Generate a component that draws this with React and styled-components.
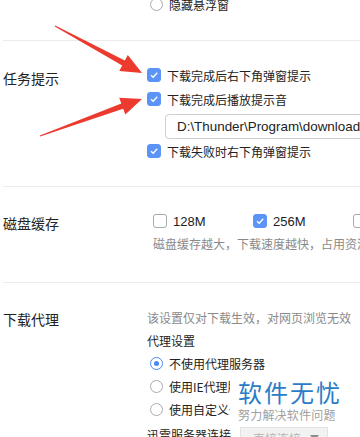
import React from 'react';
import styled, { createGlobalStyle } from 'styled-components';

const GlobalStyle = createGlobalStyle`
  html, body {
    margin: 0;
    padding: 0;
    background: #fff;
    overflow: hidden;
  }
  body {
    font-family: "Liberation Sans", "Noto Sans CJK SC", sans-serif;
    color: #333;
  }
`;

const Viewport = styled.div`
  position: relative;
  width: 360px;
  height: 437px;
  overflow: hidden;
`;

const Page = styled.div`
  width: 520px;
  margin-top: -6px;
`;

const Section = styled.div`
  display: grid;
  grid-template-columns: 144px 1fr;
  padding: ${p => p.$pad || '22px 0 23px'};
  margin-left: 3px;
  border-bottom: ${p => (p.$last ? 'none' : '1px solid #ebebeb')};
`;

const Label = styled.div`
  font-family: "Noto Sans CJK SC", sans-serif;
  font-size: 14px;
  line-height: 24px;
  color: #222;
  padding-top: ${p => p.$top || 0}px;
`;

const Column = styled.div`
  display: flex;
  flex-direction: column;
  padding-left: ${p => p.$indent || 0}px;
`;

const CheckRow = styled.label`
  display: flex;
  align-items: center;
  gap: 6px;
  height: 24px;
  font-family: "Noto Sans CJK SC", sans-serif;
  font-size: 12px;
  color: #222;
  white-space: nowrap;
`;

const Box = styled.span`
  box-sizing: border-box;
  width: 14px;
  height: 14px;
  border-radius: 3px;
  flex-shrink: 0;
  display: flex;
  align-items: center;
  justify-content: center;
  background: ${p => (p.$on ? '#5b93f6' : '#fff')};
  border: 1px solid ${p => (p.$on ? '#5b93f6' : '#aaaaaa')};
`;

const Check = ({ on }) => (
  <Box $on={on}>
    {on && (
      <svg width="10" height="10" viewBox="0 0 10 10">
        <path d="M2 5.2 L4.2 7.3 L8.2 2.8" fill="none" stroke="#fff" strokeWidth="1.3" />
      </svg>
    )}
  </Box>
);

const PathInput = styled.div`
  box-sizing: border-box;
  margin: 3px 0 0 18px;
  height: 25px;
  width: 340px;
  border: 1px solid #cfcfcf;
  border-radius: 4px;
  padding-left: 11px;
  display: flex;
  align-items: center;
  font-family: "Liberation Sans", sans-serif;
  font-size: 13.4px;
  color: #222;
  white-space: nowrap;
`;

const OptionLine = styled.div`
  display: flex;
  height: 24px;
  align-items: center;
`;

const Option = styled.label`
  display: flex;
  align-items: center;
  gap: 6px;
  width: 100px;
  font-size: 13px;
  color: #222;
`;

const Hint = styled.div`
  font-family: "Noto Sans CJK SC", sans-serif;
  font-size: 12px;
  line-height: ${p => p.$lh || 20}px;
  color: #8a8a8a;
  white-space: nowrap;
  margin-top: ${p => p.$mt || 0}px;
`;

const Title = styled.div`
  font-family: "Noto Sans CJK SC", sans-serif;
  font-size: 12px;
  line-height: 22px;
  color: #222;
`;

const RadioList = styled.div`
  display: flex;
  flex-direction: column;
  gap: 1px;
  padding-left: 3px;
`;

const RadioRow = styled.label`
  display: flex;
  align-items: center;
  gap: 6px;
  height: ${p => p.$h || 22}px;
  padding-left: ${p => p.$indent || 0}px;
  font-family: "Noto Sans CJK SC", sans-serif;
  font-size: 12px;
  color: #222;
  white-space: nowrap;
`;

const Dot = styled.span`
  box-sizing: border-box;
  width: 13px;
  height: 13px;
  border-radius: 50%;
  flex-shrink: 0;
  border: 1px solid ${p => (p.$on ? '#4a8af4' : '#aaaaaa')};
  display: flex;
  align-items: center;
  justify-content: center;
  &::after {
    content: '';
    width: 5px;
    height: 5px;
    border-radius: 50%;
    background: ${p => (p.$on ? '#4a8af4' : 'transparent')};
  }
`;

const ServerRow = styled.div`
  display: flex;
  align-items: center;
  gap: 9px;
  height: 24px;
  margin-top: 2px;
  font-family: "Noto Sans CJK SC", sans-serif;
  font-size: 12px;
  color: #222;
  white-space: nowrap;
`;

const Select = styled.div`
  box-sizing: border-box;
  width: 88px;
  height: 22px;
  margin-top: 8px;
  background: #f2f2f2;
  border: 1px solid #e2e2e2;
  display: flex;
  align-items: center;
  justify-content: space-between;
  padding: 0 8px 0 12px;
  color: #b5b5b5;
  font-size: 12px;
`;

const Watermark = styled.div`
  position: absolute;
  left: 230px;
  top: 374px;
  width: 112px;
  height: 51px;
  background: #fff;
  display: flex;
  flex-direction: column;
  align-items: flex-start;
  padding-left: 8px;
  box-sizing: border-box;
`;

const MarkTitle = styled.div`
  font-family: "Noto Sans CJK SC", sans-serif;
  font-size: 24px;
  line-height: 30px;
  letter-spacing: 2px;
  color: #2a7cc7;
  margin-top: 3px;
`;

const MarkSub = styled.div`
  font-family: "Noto Sans CJK SC", sans-serif;
  font-size: 12px;
  line-height: 16px;
  color: #a0a0a0;
  letter-spacing: 0.2px;
`;

const Overlay = styled.svg`
  position: absolute;
  left: 0;
  top: 0;
  pointer-events: none;
`;

function arrow(x1, y1, x2, y2, headLen = 21, headW = 18, shaftW = 5.5, tailW = 1) {
  const dx = x2 - x1;
  const dy = y2 - y1;
  const len = Math.hypot(dx, dy);
  const ux = dx / len;
  const uy = dy / len;
  const nx = -uy;
  const ny = ux;
  const bx = x2 - ux * headLen;
  const by = y2 - uy * headLen;
  const pts = [
    [x1 + (nx * tailW) / 2, y1 + (ny * tailW) / 2],
    [bx + (nx * shaftW) / 2, by + (ny * shaftW) / 2],
    [bx + (nx * headW) / 2, by + (ny * headW) / 2],
    [x2, y2],
    [bx - (nx * headW) / 2, by - (ny * headW) / 2],
    [bx - (nx * shaftW) / 2, by - (ny * shaftW) / 2],
    [x1 - (nx * tailW) / 2, y1 - (ny * tailW) / 2],
  ];
  return pts.map(p => p.join(',')).join(' ');
}

export default function App() {
  return (
    <Viewport>
      <GlobalStyle />
      <Page>
        <Section $pad="0 0 26px">
          <Label />
          <Column>
            <RadioRow $h={20} $indent={3}>
              <Dot />
              隐藏悬浮窗
            </RadioRow>
          </Column>
        </Section>

        <Section>
          <Label $top={3}>任务提示</Label>
          <Column>
            <CheckRow>
              <Check on />
              下载完成后右下角弹窗提示
            </CheckRow>
            <CheckRow>
              <Check on />
              下载完成后播放提示音
            </CheckRow>
            <PathInput>D:\Thunder\Program\download</PathInput>
            <CheckRow>
              <Check on />
              下载失败时右下角弹窗提示
            </CheckRow>
          </Column>
        </Section>

        <Section $pad="22px 0 28px">
          <Label $top={2}>磁盘缓存</Label>
          <Column $indent={6}>
            <OptionLine>
              <Option>
                <Check />
                128M
              </Option>
              <Option>
                <Check on />
                256M
              </Option>
              <Option>
                <Check />
                512M
              </Option>
            </OptionLine>
            <Hint $mt={1}>磁盘缓存越大，下载速度越快，占用资源越多</Hint>
          </Column>
        </Section>

        <Section $pad="23px 0 0" $last>
          <Label $top={1}>下载代理</Label>
          <Column>
            <Hint $lh={24}>该设置仅对下载生效，对网页浏览无效</Hint>
            <Title>代理设置</Title>
            <RadioList>
              <RadioRow>
                <Dot $on />
                不使用代理服务器
              </RadioRow>
              <RadioRow>
                <Dot />
                使用IE代理服务器
              </RadioRow>
              <RadioRow>
                <Dot />
                使用自定义代理服务器
              </RadioRow>
            </RadioList>
            <ServerRow>
              迅雷服务器连接
              <Select>
                直接连接
                <svg width="9" height="6" viewBox="0 0 9 6">
                  <path d="M0 0 H9 L4.5 6 Z" fill="#8c8c8c" />
                </svg>
              </Select>
            </ServerRow>
          </Column>
        </Section>
      </Page>

      <Watermark>
        <MarkTitle>软件无忧</MarkTitle>
        <MarkSub>努力解决软件问题</MarkSub>
      </Watermark>

      <Overlay width="360" height="437" viewBox="0 0 360 437">
        <polygon points={arrow(55, 26, 142, 73)} fill="#ec3b2e" />
        <polygon points={arrow(40, 136, 142, 99)} fill="#ec3b2e" />
      </Overlay>
    </Viewport>
  );
}
